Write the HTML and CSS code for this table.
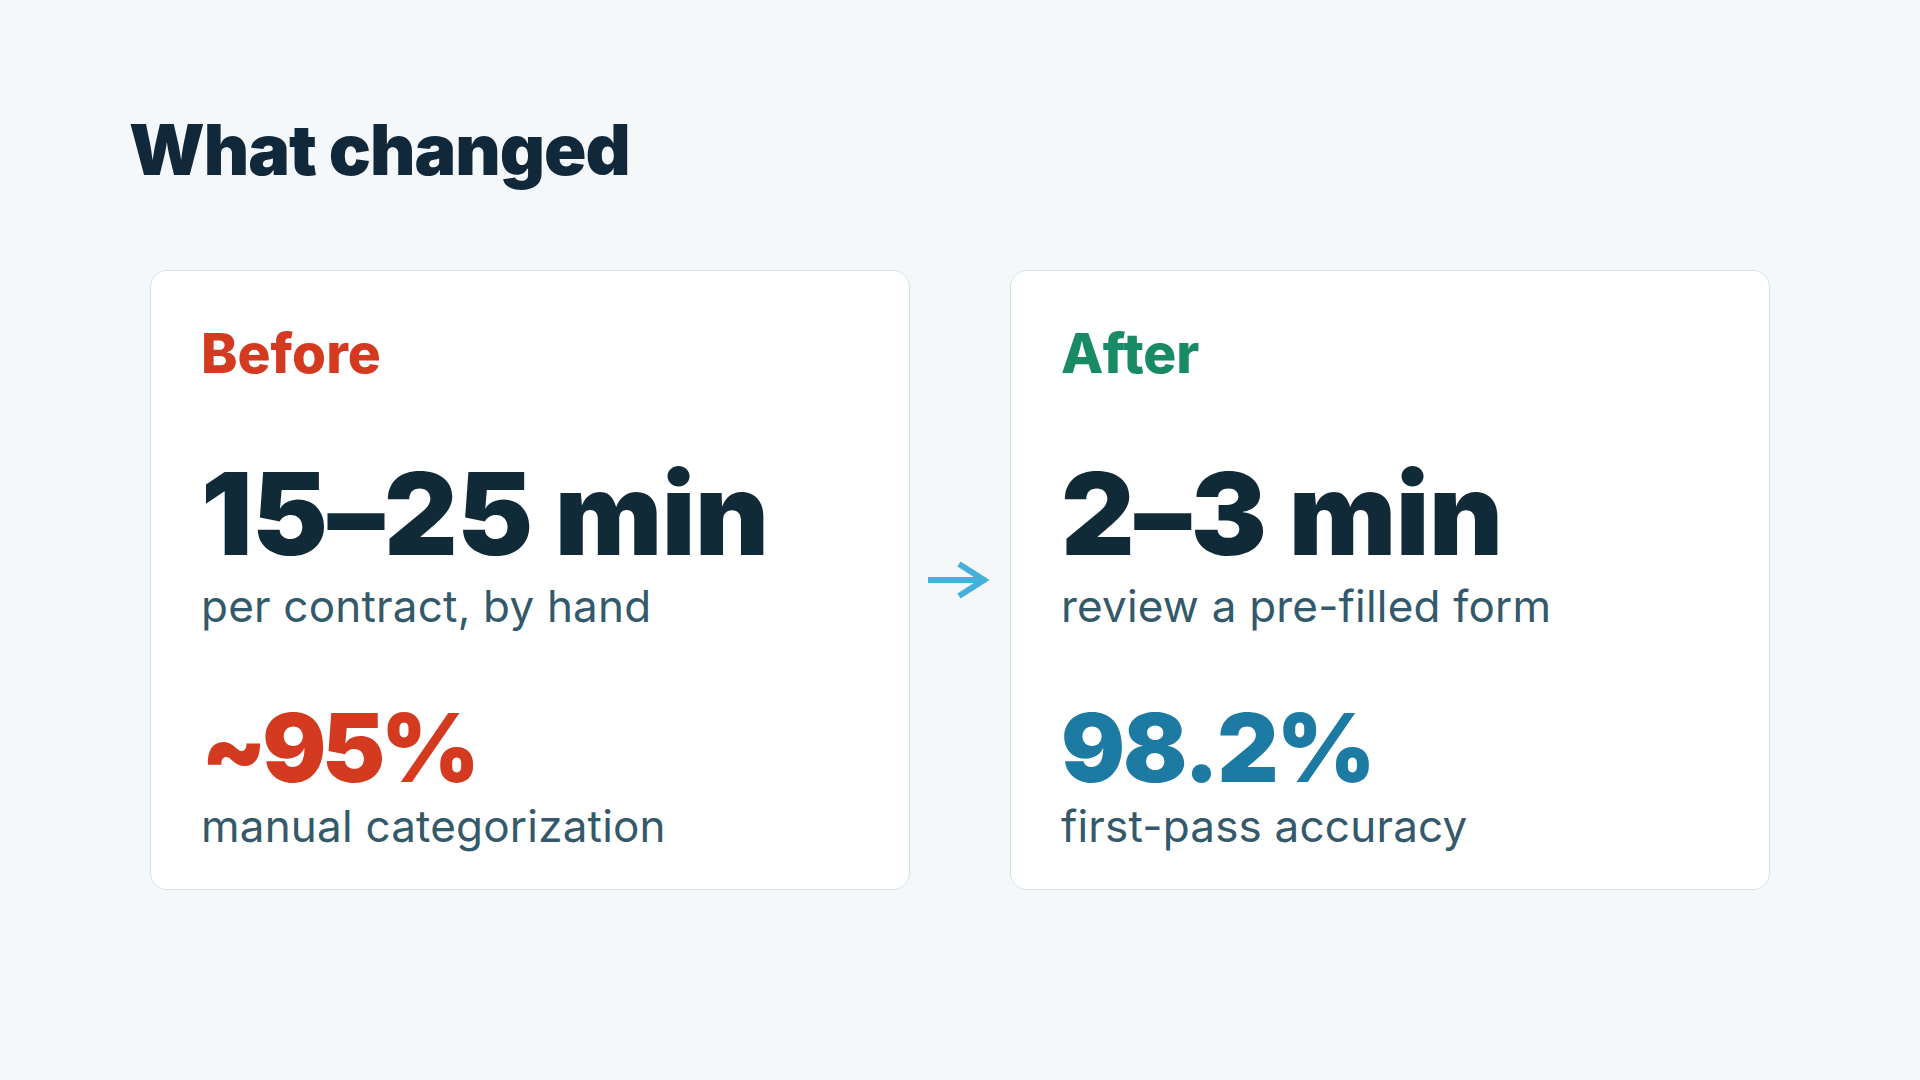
FILE: index.html
```html
<!DOCTYPE html>
<html lang="en">
<head>
<meta charset="utf-8">
<title>What changed</title>
<link rel="stylesheet" href="styles.css">
</head>
<body>
<main class="slide">
  <h1 class="title">What changed</h1>
  <section class="compare">
    <article class="card">
      <h2 class="label label-before">Before</h2>
      <div class="metric">
        <div class="value value-main">15–25 min</div>
        <div class="sub sub-main">per contract, by hand</div>
      </div>
      <div class="metric metric-second">
        <div class="value value-second value-red">~95%</div>
        <div class="sub sub-second">manual categorization</div>
      </div>
    </article>
    <div class="arrow">
      <svg width="64" height="40" viewBox="0 0 64 40" aria-hidden="true">
        <path d="M0 20 H58" fill="none" stroke="#45b0da" stroke-width="6"/>
        <path d="M31 4 L56 20 L31 36" fill="none" stroke="#45b0da" stroke-width="6" stroke-linejoin="miter"/>
      </svg>
    </div>
    <article class="card">
      <h2 class="label label-after">After</h2>
      <div class="metric">
        <div class="value value-main">2–3 min</div>
        <div class="sub sub-main">review a pre-filled form</div>
      </div>
      <div class="metric metric-second">
        <div class="value value-second value-blue">98.2%</div>
        <div class="sub sub-second">first-pass accuracy</div>
      </div>
    </article>
  </section>
</main>
</body>
</html>
```
FILE: styles.css
```css
html, body {
  margin: 0;
  padding: 0;
}
body {
  background: #f4f8fa;
  font-family: Inter, "Noto Sans", sans-serif;
  color: #112a38;
  width: 1920px;
  height: 1080px;
  overflow: hidden;
}
.slide {
  padding: 115px 0 0 0;
}
.title {
  margin: 0 0 0 129px;
  font-size: 70px;
  line-height: 1;
  font-weight: 900;
  letter-spacing: -1px;
  color: #11283a;
}
.compare {
  margin-top: 85px;
  display: grid;
  grid-template-columns: 760px 100px 760px;
  justify-content: center;
}
.card {
  box-sizing: border-box;
  height: 620px;
  background: #ffffff;
  border: 1.5px solid #d2e2e8;
  border-radius: 17px;
  padding: 55px 50px 0 50px;
  display: flex;
  flex-direction: column;
}
.label {
  margin: 0;
  font-size: 55px;
  line-height: 1;
  font-weight: 800;
}
.label-before { color: #d43a1f; }
.label-after { color: #188b66; }
.metric {
  display: flex;
  flex-direction: column;
  margin-top: 76px;
}
.metric-second {
  margin-top: 67px;
}
.value {
  font-weight: 900;
  line-height: 1;
  color: #112a38;
}
.value-main {
  font-size: 114px;
  letter-spacing: -0.5px;
}
.value-second {
  font-size: 95px;
  letter-spacing: -2px;
}
.value-red {
  color: #d43a1f;
  letter-spacing: -4.5px;
}
.value-blue { color: #1c7aa3; }
.sub {
  font-size: 44px;
  line-height: 1.2;
  color: #33596a;
  font-weight: 400;
  letter-spacing: 0.2px;
}
.sub-main {
  margin-top: 9px;
}
.sub-second {
  margin-top: 5px;
}
.arrow {
  display: flex;
  align-items: center;
  justify-content: center;
}
.arrow svg {
  display: block;
}
```
